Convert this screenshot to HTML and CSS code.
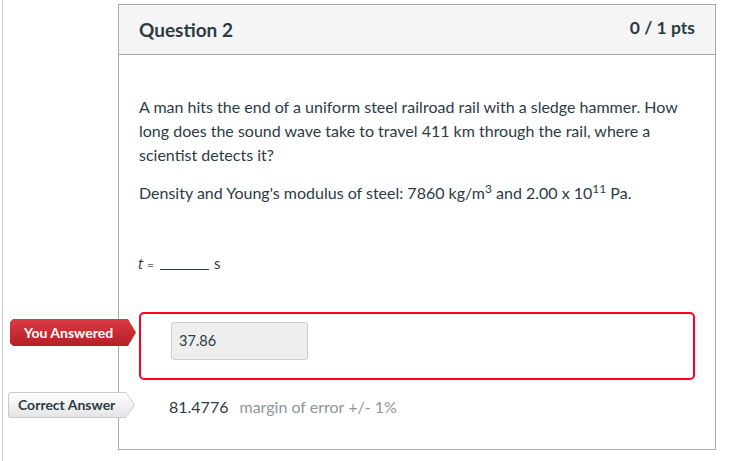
FILE: index.html
```html
<!DOCTYPE html>
<html>
<head>
<meta charset="utf-8">
<link rel="stylesheet" href="styles.css">
</head>
<body>
<div class="page">
  <div class="card">
    <div class="card-header">
      <h2 class="title">Question 2</h2>
      <span class="pts">0 / 1 pts</span>
    </div>
    <div class="card-body">
      <p class="text">A man hits the end of a uniform steel railroad rail with a sledge hammer. How long does the sound wave take to travel 411 km through the rail, where a scientist detects it?</p>
      <p class="text">Density and Young's modulus of steel: 7860 kg/m<sup>3</sup> and 2.00 x 10<sup>11</sup> Pa.</p>
      <p class="formula"><i class="var">t</i> <span class="eq">=</span> <span class="blank"></span> <span class="unit">s</span></p>

      <div class="answer wrong">
        <span class="badge badge-red">You Answered</span>
        <div class="answer-input">37.86</div>
      </div>

      <div class="answer correct">
        <span class="badge badge-gray"><span class="badge-inner">Correct Answer</span></span>
        <span class="value">81.4776</span>
        <span class="margin">margin of error +/- 1%</span>
      </div>
    </div>
  </div>
</div>
</body>
</html>
```
FILE: styles.css
```css
* { box-sizing: border-box; }
html, body { margin: 0; padding: 0; background: #fff; }
body {
  font-family: Lato, "Open Sans", "Liberation Sans", sans-serif;
  color: #2d3b45;
}
.page {
  margin-left: 2px;
  border-left: 1px solid #c7cdd1;
  height: 461px;
  padding-top: 4px;
}
.card {
  margin-left: 115px;
  width: 598px;
  height: 446px;
  border: 1px solid #aaaaaa;
}
.card-header {
  height: 50px;
  background: #f5f5f5;
  border-bottom: 1px solid #aaaaaa;
  display: flex;
  align-items: center;
  justify-content: space-between;
  padding: 0 20px;
}
.title {
  margin: 0;
  font-size: 19px;
  font-weight: 700;
  color: #2d3b45;
}
.pts {
  font-size: 17.5px;
  font-weight: 700;
  color: #2d3b45;
  margin-top: -4px;
}
.card-body {
  padding: 40px 20px 0 20px;
}
.text {
  margin: 0 0 14px 0;
  font-size: 16px;
  line-height: 24px;
}
.text sup {
  font-size: 12px;
  line-height: 0;
}
.formula {
  margin: 46px 0 35px 0;
  font-size: 14px;
  line-height: 24px;
  color: #2d3b45;
  display: flex;
  align-items: baseline;
}
.var { font-family: "Open Sans", Lato, sans-serif; font-size: 15px; margin-left: -1px; }
.eq { color: #777; font-size: 12px; margin-left: 4px; }
.blank {
  display: inline-block;
  width: 49px;
  height: 1px;
  background: #2d3b45;
  margin-left: 6px;
  align-self: center;
  position: relative;
  top: 5px;
}
.unit { font-size: 15px; margin-left: 5px; }
.answer { position: relative; }
.wrong {
  height: 68px;
  border: 2px solid #ff0022;
  border-radius: 5px;
  padding: 8px 30px;
}
.answer-input {
  width: 137px;
  height: 38px;
  background: #eeeeee;
  border: 1px solid #cccccc;
  border-radius: 3px;
  font-size: 14.5px;
  line-height: 36px;
  padding-left: 7px;
  color: #2d3b45;
}
.badge {
  position: absolute;
  font-size: 14px;
  font-weight: 700;
  white-space: nowrap;
}
.badge-red {
  left: -131px;
  top: 5px;
  width: 126px;
  height: 27px;
  line-height: 27px;
  padding-left: 14px;
  color: #fff;
  background: linear-gradient(#dc3b42, #b51f26);
  clip-path: polygon(0 3px, 3px 0, calc(100% - 8px) 0, 100% 50%, calc(100% - 8px) 100%, 3px 100%, 0 calc(100% - 3px));
  border-radius: 3px 0 0 3px;
}
.correct {
  display: flex;
  align-items: baseline;
  padding: 17px 0 0 30px;
  font-size: 16px;
}
.badge-gray {
  left: -131px;
  top: 12px;
  width: 127px;
  height: 26px;
  background: #c9c9c9;
  clip-path: polygon(0 0, calc(100% - 9px) 0, 100% 50%, calc(100% - 9px) 100%, 0 100%);
  border-radius: 3px 0 0 3px;
}
.badge-inner {
  position: absolute;
  left: 1px;
  top: 1px;
  right: 1px;
  bottom: 1px;
  background: linear-gradient(#ffffff, #e4e4e4);
  clip-path: polygon(0 0, calc(100% - 8px) 0, 100% 50%, calc(100% - 8px) 100%, 0 100%);
  border-radius: 2px 0 0 2px;
  color: #2d3b45;
  line-height: 24px;
  padding-left: 9px;
}
.value { color: #2d3b45; }
.margin { color: #8e969c; margin-left: 11px; }
```
